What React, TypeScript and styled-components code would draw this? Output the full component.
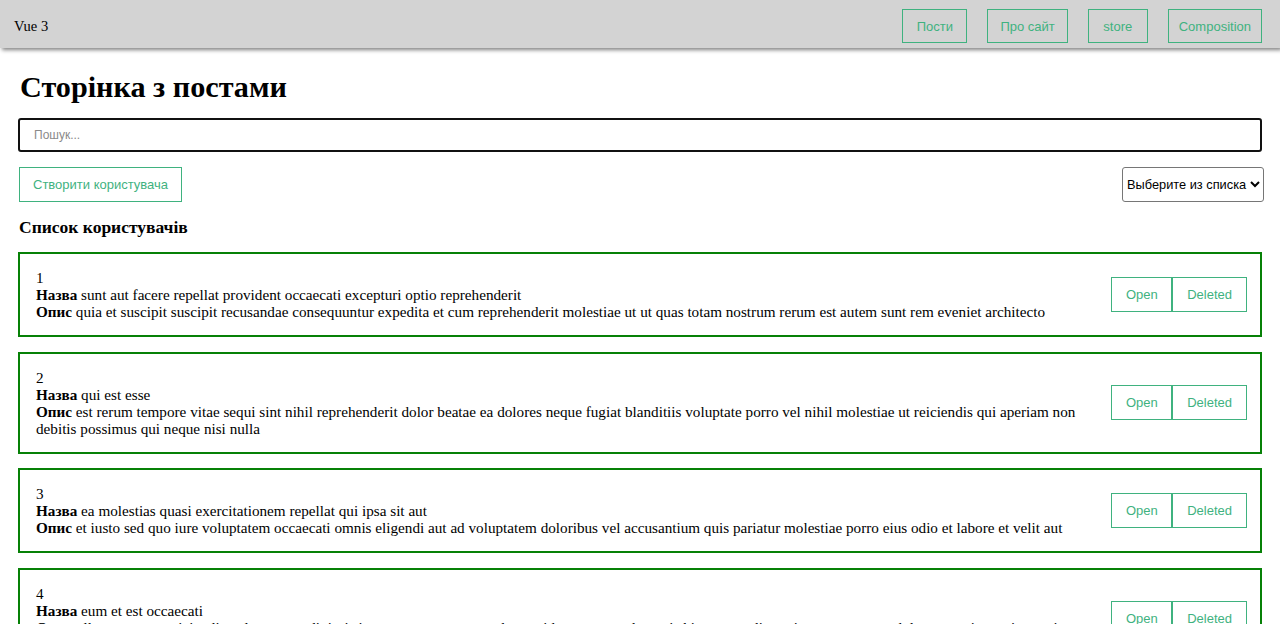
import React from "react";
import styled, { createGlobalStyle } from "styled-components";

const GlobalStyle = createGlobalStyle`
  * { box-sizing: border-box; }
  html, body { margin: 0; padding: 0; background: #fff; }
  body { font-family: "Liberation Serif", "Times New Roman", serif; color: #000; }
`;

const GREEN = "#3fb27f";

const Navbar = styled.nav`
  height: 48px;
  background: #d3d3d3;
  box-shadow: 2px 2px 4px gray;
  display: flex;
  align-items: center;
  padding: 4px 18px 0 14px;
  font-family: "Liberation Serif", serif;
  font-size: 14.5px;
`;

const NavButtons = styled.div`
  margin-left: auto;
  display: flex;
  gap: 20px;
`;

const Button = styled.button<{ $h?: number; $px?: number }>`
  font-family: "Liberation Sans", Arial, sans-serif;
  font-size: 13px;
  color: ${GREEN};
  background: none;
  border: 1px solid ${GREEN};
  height: ${(p) => p.$h ?? 34}px;
  padding: 0 ${(p) => p.$px ?? 13}px;
  cursor: pointer;
  flex-shrink: 0;
`;

const Main = styled.main`
  padding: 0 18px;
`;

const Title = styled.h1`
  margin: 22px 0 14px 2px;
  font-size: 30.2px;
  line-height: 34px;
  font-weight: bold;
`;

const SearchInput = styled.input`
  display: block;
  width: 100%;
  height: 34px;
  border: 2px solid #111;
  border-radius: 3px;
  padding: 0 14px;
  font-family: "Liberation Sans", Arial, sans-serif;
  font-size: 12px;
  outline: none;
  &::placeholder { color: #8a8a8a; }
`;

const Toolbar = styled.div`
  margin-top: 15px;
  display: flex;
  justify-content: space-between;
  align-items: center;
  padding-left: 1px;
`;

const Select = styled.select`
  height: 35px;
  font-family: "Liberation Sans", Arial, sans-serif;
  font-size: 12.8px;
  color: #000;
  border: 1px solid #767676;
  border-radius: 3px;
  background: #fff;
  padding: 0;
  margin-right: -2px;
`;

const ListTitle = styled.h3`
  margin: 15px 0 15px 1px;
  font-size: 17.5px;
  line-height: 20px;
  font-weight: bold;
`;

const List = styled.div`
  display: flex;
  flex-direction: column;
  gap: 14.5px;
`;

const Card = styled.div`
  border: 2px solid #078107;
  padding: 15px 13px 15px 16px;
  display: flex;
  align-items: center;
  justify-content: space-between;
  font-size: 15.2px;
  line-height: 17px;
`;

const CardText = styled.div`
  flex: 1;
  min-width: 0;
`;

const CardActions = styled.div`
  display: flex;
  margin-left: 24px;
`;

type Post = { id: number; title: string; body: string };

const posts: Post[] = [
  {
    id: 1,
    title: "sunt aut facere repellat provident occaecati excepturi optio reprehenderit",
    body: "quia et suscipit suscipit recusandae consequuntur expedita et cum reprehenderit molestiae ut ut quas totam nostrum rerum est autem sunt rem eveniet architecto",
  },
  {
    id: 2,
    title: "qui est esse",
    body: "est rerum tempore vitae sequi sint nihil reprehenderit dolor beatae ea dolores neque fugiat blanditiis voluptate porro vel nihil molestiae ut reiciendis qui aperiam non debitis possimus qui neque nisi nulla",
  },
  {
    id: 3,
    title: "ea molestias quasi exercitationem repellat qui ipsa sit aut",
    body: "et iusto sed quo iure voluptatem occaecati omnis eligendi aut ad voluptatem doloribus vel accusantium quis pariatur molestiae porro eius odio et labore et velit aut",
  },
  {
    id: 4,
    title: "eum et est occaecati",
    body: "ullam et saepe reiciendis voluptatem adipisci sit amet autem assumenda provident rerum culpa quis hic commodi nesciunt rem tenetur doloremque ipsam iure quis sunt voluptatem rerum illo velit",
  },
];

export default function App() {
  return (
    <>
      <GlobalStyle />
      <Navbar>
        <div>Vue 3</div>
        <NavButtons>
          <Button $px={13.5}>Пости</Button>
          <Button $px={12}>Про сайт</Button>
          <Button $px={14.5}>store</Button>
          <Button $px={10}>Composition</Button>
        </NavButtons>
      </Navbar>
      <Main>
        <Title>Сторінка з постами</Title>
        <SearchInput placeholder="Пошук..." />
        <Toolbar>
          <Button $h={35} $px={13}>Створити користувача</Button>
          <Select defaultValue="">
            <option value="" disabled>
              Выберите из списка
            </option>
            <option value="title">По названию</option>
            <option value="body">По содержимому</option>
          </Select>
        </Toolbar>
        <ListTitle>Список користувачів</ListTitle>
        <List>
          {posts.map((p) => (
            <Card key={p.id}>
              <CardText>
                <div>{p.id}</div>
                <div>
                  <strong>Назва</strong> {p.title}
                </div>
                <div>
                  <strong>Опис</strong> {p.body}
                </div>
              </CardText>
              <CardActions>
                <Button $h={35} $px={13.5}>Open</Button>
                <Button $h={35} $px={14}>Deleted</Button>
              </CardActions>
            </Card>
          ))}
        </List>
      </Main>
    </>
  );
}
